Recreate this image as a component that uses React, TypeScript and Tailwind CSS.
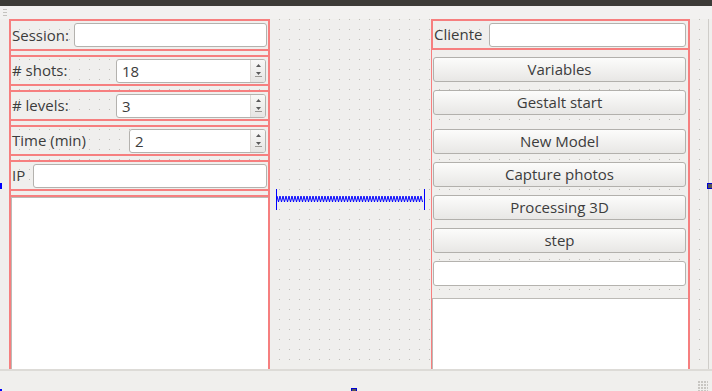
import React from 'react';

const red = 'border-[#f67f7f]';

function SpinBox({ value, width }: { value: string; width: string }) {
    return (
        <div className={`${width} h-[24px] flex rounded-[3px] border border-[#b4b2ae] bg-white overflow-hidden`}>
            <div className="flex-1 pl-[5px] text-[15px] leading-[22px] text-[#3c3c3c]">{value}</div>
            {/* flechas del spinbox */}
            <div className="w-[15px] flex flex-col items-center justify-center gap-[5px] bg-linear-to-b from-[#f8f8f7] to-[#e6e5e3] border-l border-[#dcdad6]">
                <svg width="5" height="3" viewBox="0 0 5 3">
                    <path d="M2.5 0 L5 3 L0 3 Z" fill="#5a5a5a" />
                </svg>
                <svg width="7" height="5" viewBox="0 0 7 5">
                    <path d="M1 0 L6 0 L3.5 3 Z" fill="#5a5a5a" />
                    <rect x="0" y="4" width="7" height="1" fill="#9a9893" />
                </svg>
            </div>
        </div>
    );
}

function Btn({ label, className = '' }: { label: string; className?: string }) {
    return (
        <div className={`w-[253px] h-[25px] rounded-[3px] border border-[#b2b0ac] bg-linear-to-b from-[#fcfcfb] to-[#e8e7e5] text-[15px] text-[#3c3c3c] flex items-center justify-center ${className}`}>
            {label}
        </div>
    );
}

function Spacer() {
    // muelle horizontal del diseñador
    const pts: string[] = [];
    for (let x = 1; x <= 147; x += 3) {
        pts.push(`${x},7`, `${x + 1.5},13`);
    }
    return (
        <svg width="149" height="21" viewBox="0 0 149 21" className="ml-[6px]">
            <rect x="0" y="0" width="1" height="21" fill="#0000ff" />
            <rect x="148" y="0" width="1" height="21" fill="#0000ff" />
            <polyline points={pts.join(' ')} fill="none" stroke="#0000ff" strokeWidth="1" />
        </svg>
    );
}

export default function App() {
    return (
        <div className="w-[712px] h-[391px] relative overflow-hidden flex flex-col bg-[#f0efed] font-['Open_Sans',sans-serif]">
            {/* barra superior */}
            <div className="h-[6px] bg-[#3c3b37]" />
            <div className="h-[13px] bg-[#f2f1f0] flex flex-col gap-[2px] pl-[3px] pt-[3px]">
                <div className="w-[4px] h-[1px] bg-[#c4c2be]" />
                <div className="w-[4px] h-[1px] bg-[#c4c2be]" />
                <div className="w-[4px] h-[1px] bg-[#c4c2be]" />
            </div>

            {/* formulario */}
            <div className="h-[350px] flex bg-[radial-gradient(circle_at_4.5px_5.5px,#bfbdb8_0.7px,transparent_0.9px)] bg-[length:10px_10px] bg-[position:5px_-5px]">
                <div className="w-[9px]" />

                {/* columna izquierda */}
                <div className={`w-[261px] border-x-2 ${red} flex flex-col gap-[4px] text-[#3c3c3c] text-[15px]`}>
                    <div className={`h-[32px] border-y-2 ${red} flex items-center`}>
                        <span className="w-[63px] pl-[1px]">Session:</span>
                        <div className="w-[193px] h-[24px] rounded-[3px] border border-[#b4b2ae] bg-white" />
                    </div>
                    <div className={`h-[31px] border-y-2 ${red} flex items-center`}>
                        <span className="w-[105px] pl-[1px]"># shots:</span>
                        <SpinBox value="18" width="w-[150px]" />
                    </div>
                    <div className={`h-[31px] border-y-2 ${red} flex items-center`}>
                        <span className="w-[105px] pl-[1px]"># levels:</span>
                        <SpinBox value="3" width="w-[150px]" />
                    </div>
                    <div className={`h-[31px] border-y-2 ${red} flex items-center`}>
                        <span className="w-[118px] pl-[1px]">Time (min)</span>
                        <SpinBox value="2" width="w-[137px]" />
                    </div>
                    <div className={`h-[31px] border-y-2 ${red} flex items-center`}>
                        <span className="w-[22px] pl-[1px]">IP</span>
                        <div className="w-[234px] h-[24px] rounded-[3px] border border-[#b4b2ae] bg-white" />
                    </div>
                    <div className={`flex-1 border-t-2 ${red} flex`}>
                        <div className="flex-1 bg-white border-t border-l border-[#bcbab6]" />
                    </div>
                </div>

                {/* centro con el espaciador */}
                <div className="w-[161px] pt-[170px]">
                    <Spacer />
                </div>

                {/* columna derecha */}
                <div className={`w-[259px] border-l border-r-2 ${red} flex flex-col text-[#3c3c3c] text-[15px]`}>
                    <div className={`h-[31px] border-y-2 border-l ${red} flex items-center`}>
                        <span className="w-[56px] pl-[1px]">Cliente</span>
                        <div className="w-[197px] h-[24px] rounded-[3px] border border-[#b4b2ae] bg-white" />
                    </div>
                    <div className="pl-[1px] pt-[7px] flex flex-col">
                        <Btn label="Variables" />
                        <Btn label="Gestalt start" className="mt-[8px]" />
                        <Btn label="New Model" className="mt-[14px]" />
                        <Btn label="Capture photos" className="mt-[8px]" />
                        <Btn label="Processing 3D" className="mt-[8px]" />
                        <Btn label="step" className="mt-[8px]" />
                        <div className="w-[253px] h-[25px] mt-[8px] rounded-[3px] border border-[#b4b2ae] bg-white" />
                    </div>
                    <div className="flex-1 mt-[12px] bg-white border-t border-l border-[#bcbab6]" />
                </div>

                <div className="w-[18px]" />
                <div className="w-[1px] bg-[#cfcdc9]" />
                <div className="flex-1 bg-[#f0efed]" />
            </div>

            {/* barra inferior */}
            <div className="flex-1 border-t-2 border-[#dddbd7] bg-[#f0efed] relative">
                <div className="absolute right-[4px] bottom-0 w-[10px] h-[10px] bg-[radial-gradient(circle_at_1px_1px,#c8c6c2_0.8px,transparent_1px)] bg-[length:3px_3px]" />
            </div>

            {/* asas de selección */}
            <div className="absolute left-0 top-[183px] w-[2px] h-[6px] bg-[#0000ff]" />
            <div className="absolute left-[707px] top-[183px] w-[6px] h-[6px] border border-[#0000d0] bg-[#555555]" />
            <div className="absolute left-[351px] top-[388px] w-[6px] h-[6px] border border-[#0000d0] bg-[#555555]" />
            <div className="absolute left-0 top-[389px] w-[2px] h-[2px] bg-[#0000ff]" />
        </div>
    );
}
